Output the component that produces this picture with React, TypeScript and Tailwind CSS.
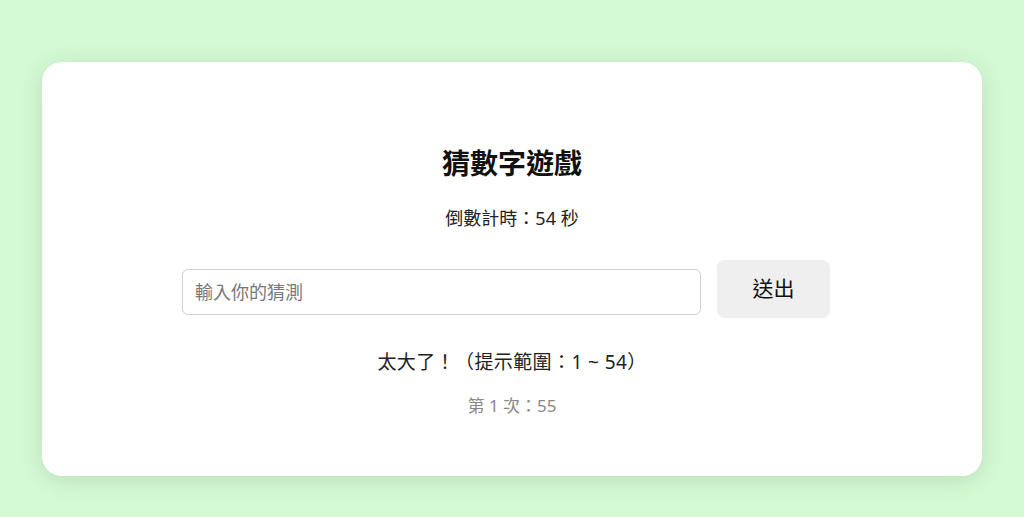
import React from "react";

export default function App() {
  const font = { fontFamily: '"Noto Sans", "Noto Sans CJK TC", sans-serif' };
  return (
    <div
      className="w-[1024px] h-[517px] bg-[#d4fad4] px-[42px] pt-[62px] overflow-hidden"
      style={font}
    >
      <div className="w-[940px] h-[414px] bg-white rounded-[20px] shadow-[0_4px_24px_rgba(0,0,0,0.12)] flex flex-col items-center pt-[83px]">
        <h1 className="text-[28px] leading-[36px] font-bold text-[#111]">猜數字遊戲</h1>
        <p className="mt-[24px] text-[18px] leading-[26px] text-[#222]">倒數計時：54 秒</p>
        <div className="mt-[29px] flex items-start gap-[16px] pr-[12px]">
          <input
            className="mt-[9px] w-[519px] h-[46px] border border-[#d0d0d0] rounded-[6px] px-[12px] text-[18px] text-[#222] placeholder-[#777] outline-none"
            placeholder="輸入你的猜測"
          />
          <button className="w-[113px] h-[58px] bg-[#efefef] rounded-[8px] text-[21px] text-[#111]">
            送出
          </button>
        </div>
        <p className="mt-[30px] text-[19px] leading-[28px] text-[#222] tracking-[0.4px]">太大了！（提示範圍：1 ~ 54）</p>
        <p className="mt-[18px] text-[17px] leading-[24px] text-[#888]">第 1 次：55</p>
      </div>
    </div>
  );
}
